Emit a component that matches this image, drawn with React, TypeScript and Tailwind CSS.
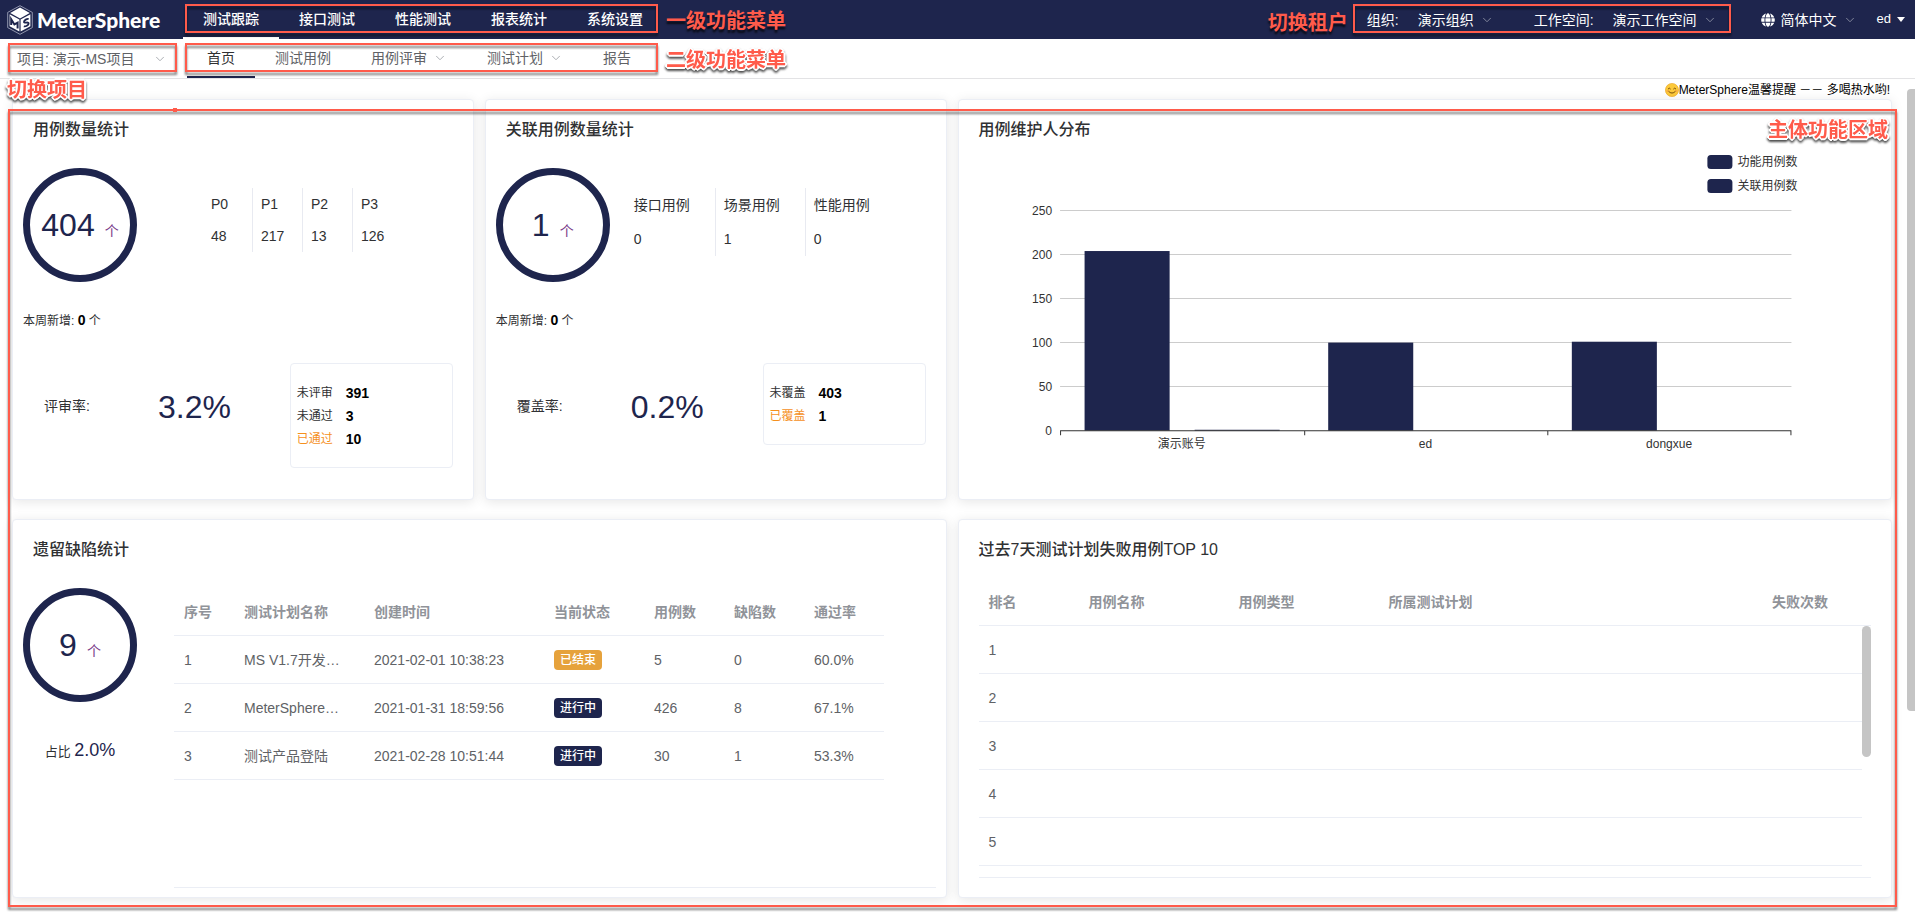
import type { ReactNode } from "react";
import { ChevronDown } from "lucide-react";
import { FaGlobe } from "react-icons/fa";

const primaryMenu = ["测试跟踪", "接口测试", "性能测试", "报表统计", "系统设置"];

const secondaryMenu = [
  { label: "首页", active: true },
  { label: "测试用例" },
  { label: "用例评审", dropdown: true },
  { label: "测试计划", dropdown: true },
  { label: "报告" },
];

const plans = [
  { id: 1, name: "MS V1.7开发…", created: "2021-02-01 10:38:23", status: "已结束", cases: 5, bugs: 0, rate: "60.0%" },
  { id: 2, name: "MeterSphere…", created: "2021-01-31 18:59:56", status: "进行中", cases: 426, bugs: 8, rate: "67.1%" },
  { id: 3, name: "测试产品登陆", created: "2021-02-28 10:51:44", status: "进行中", cases: 30, bugs: 1, rate: "53.3%" },
];

function Chevron({ className = "" }: { className?: string }) {
  return <ChevronDown aria-hidden="true" strokeWidth={1.5} className={`pointer-events-none size-[14px] shrink-0 ${className}`} />;
}

function Frame({ className = "" }: { className?: string }) {
  return (
    <div
      aria-hidden="true"
      className={`pointer-events-none absolute z-10 border-2 border-[#ff5b4b] [filter:drop-shadow(0_3px_1px_rgba(0,0,0,0.5))] ${className}`}
    />
  );
}

function Note({ children, outlined = false, className = "" }: { children: ReactNode; outlined?: boolean; className?: string }) {
  const look = outlined
    ? "[filter:drop-shadow(0_2px_1px_rgba(0,0,0,0.7))] [text-shadow:2px_0_#fff,-2px_0_#fff,0_2px_#fff,0_-2px_#fff,1px_1px_#fff,-1px_1px_#fff,1px_-1px_#fff,-1px_-1px_#fff]"
    : "[text-shadow:0_3px_2px_rgba(0,0,0,0.7)]";
  return (
    <span className={`pointer-events-none absolute z-20 text-xl leading-6 font-bold whitespace-nowrap text-[#ff5b4b] ${look} ${className}`}>
      {children}
    </span>
  );
}

function Logo() {
  return (
    <a href="#home" className="flex w-[183px] shrink-0 items-center gap-1 pl-[7px] text-white">
      <svg aria-hidden="true" viewBox="0 0 26 30" className="h-[30px] w-[26px]">
        <path d="M13 .7 25.3 7.4v15.2L13 29.3.7 22.6V7.4Z" fill="none" stroke="#aeb2c6" strokeWidth=".8" />
        <path d="M13 2.6 22.8 8 13 13.4 3.2 8Z" fill="#fff" />
        <path d="M2.6 9.2 12.4 14.6v12L2.6 21.2Z" fill="#fff" />
        <path d="M13.6 14.6 23.4 9.2v12l-9.8 5.4Z" fill="#fff" />
        <path d="M4.2 20v-5.8l3.200 5.200 3.200-1.700v5.800" fill="none" stroke="#1e254d" strokeWidth="2" />
        <path d="M21.6 14c-1.600-.4-4.600 1-4.600 2.900 0 1.700 4.600-.4 4.600 1.500 0 1.800-3.100 3.400-4.800 2.900" fill="none" stroke="#1e254d" strokeWidth="1.900" />
      </svg>
      <span className="font-['Lato'] text-[21px] leading-6 font-black">MeterSphere</span>
    </a>
  );
}

function HeaderSelect({ label, value }: { label: string; value: string }) {
  return (
    <span className="flex items-center gap-[6px]">
      <select aria-label={label} className="appearance-none bg-transparent text-sm text-white">
        <option>{value}</option>
      </select>
      <Chevron className="text-[#8e92a6]" />
    </span>
  );
}

function Header() {
  return (
    <header className="flex h-[39px] items-center bg-[#1e254d] text-sm text-white">
      <Logo />
      <nav aria-label="一级功能菜单" className="relative flex h-full shrink-0">
        {primaryMenu.map((item, i) => (
          <a
            key={item}
            href={`#${item}`}
            className={`flex w-24 items-center justify-center border-b-2 pt-[2px] pb-px font-medium ${i === 0 ? "border-white" : "border-transparent"}`}
          >
            {item}
          </a>
        ))}
        <Frame className="top-1 right-[5px] left-[2px] h-[29px]" />
        <Note className="top-[9px] left-full ml-[3px]">一级功能菜单</Note>
      </nav>
      <div className="relative ml-auto flex h-full shrink-0 items-center px-[14px]">
        <span className="mr-[19px]">组织:</span>
        <HeaderSelect label="组织" value="演示组织" />
        <span className="mr-[19px] ml-10">工作空间:</span>
        <HeaderSelect label="工作空间" value="演示工作空间" />
        <Frame className="inset-x-0 top-1 h-[29px]" />
        <Note className="top-[11px] right-full mr-[5px]">切换租户</Note>
      </div>
      <div className="ml-[30px] flex shrink-0 items-center gap-[6px]">
        <FaGlobe aria-hidden="true" className="size-[14px]" />
        <HeaderSelect label="语言" value="简体中文" />
      </div>
      <button type="button" className="mr-[10px] ml-5 flex shrink-0 items-center gap-[6px] text-[13px]">
        ed
        <svg aria-hidden="true" viewBox="0 0 8 5" className="h-[5px] w-2">
          <path d="M0 0h8L4 5Z" fill="currentColor" />
        </svg>
      </button>
    </header>
  );
}

function SubHeader() {
  return (
    <div className="flex h-10 items-stretch border-b border-[#e3e3e5] text-sm text-[#606266]">
      <div className="relative w-[187px] shrink-0 pl-[17px]">
        <div className="flex h-full w-[150px] items-center justify-between">
          <select aria-label="项目" className="w-32 appearance-none bg-transparent">
            <option>项目: 演示-MS项目</option>
          </select>
          <Chevron className="text-[#a0a3a9]" />
        </div>
        <Frame className="top-1 right-[10px] left-2 h-[29px]" />
        <Note outlined className="top-[39px] left-[7px]">切换项目</Note>
      </div>
      <nav aria-label="二级功能菜单" className="relative flex">
        {secondaryMenu.map((item) => (
          <a
            key={item.label}
            href={`#${item.label}`}
            className={`flex items-center gap-[6px] border-b-2 px-5 ${item.active ? "border-[#1e254d] text-[#303133]" : "border-transparent"}`}
          >
            {item.label}
            {item.dropdown && <Chevron className="text-[#a0a3a9]" />}
          </a>
        ))}
        <Frame className="top-1 -right-[7px] -left-[2px] h-[29px]" />
        <Note outlined className="top-[9px] left-full ml-[15px]">二级功能菜单</Note>
      </nav>
    </div>
  );
}

function Card({ title, className = "", children }: { title: string; className?: string; children: ReactNode }) {
  return (
    <section className={`rounded border border-[#ebeef5] bg-white pt-[19px] shadow-[0_2px_12px_0_rgba(0,0,0,0.1)] ${className}`}>
      <h2 className="px-5 text-base leading-[22px] font-medium text-[#303133]">{title}</h2>
      {children}
    </section>
  );
}

function Ring({ value }: { value: number }) {
  return (
    <div className="flex size-[114px] shrink-0 items-center justify-center rounded-full border-[7px] border-[#1e254d]">
      <span className="flex items-baseline gap-[10px] text-[32px] leading-10 text-[#1e254d]">
        {value}
        <span className="text-sm text-[#783887]">个</span>
      </span>
    </div>
  );
}

type Pair = [string, number];

function CountCard(props: {
  title: string;
  total: number;
  breakdown: Pair[];
  wide?: boolean;
  rateLabel: string;
  rate: string;
  details: Pair[];
}) {
  const { title, total, breakdown, wide, rateLabel, rate, details } = props;
  return (
    <Card title={title} className="min-h-[401px]">
      <div className="mt-[27px] flex px-[10px]">
        <Ring value={total} />
        <dl className={`mt-5 flex text-sm text-[#303133] ${wide ? "ml-[15px] leading-[34px]" : "ml-[65px] leading-8"}`}>
          {breakdown.map(([name, count], i) => (
            <div
              key={name}
              className={`self-start border-l pl-2 ${wide ? "w-[90px]" : "w-[50px]"} ${i ? "border-[#e8eaf1]" : "border-transparent"}`}
            >
              <dt>{name}</dt>
              <dd>{count}</dd>
            </div>
          ))}
        </dl>
      </div>
      <p className="mt-7 px-[10px] text-xs leading-5 text-[#303133]">
        本周新增: <strong className="text-sm leading-5 text-black">0</strong> 个
      </p>
      <div className="mt-8 flex items-start pr-5 pl-[31px]">
        <span className="mt-8 w-[114px] text-sm leading-[22px] text-[#303133]">{rateLabel}</span>
        <span className="mt-6 text-[32px] leading-10 text-[#1e254d]">{rate}</span>
        <dl className="ml-auto w-[163px] rounded border border-[#ebeef5] px-[6px] py-[17px]">
          {details.map(([name, count], i) => (
            <div key={name} className="flex h-[23px] items-center">
              <dt className={`w-[49px] text-xs ${i === details.length - 1 ? "text-[#f5901d]" : "text-[#303133]"}`}>{name}</dt>
              <dd className="text-sm font-bold text-black">{count}</dd>
            </div>
          ))}
        </dl>
      </div>
    </Card>
  );
}

const groups = [
  { name: "演示账号", values: [204, 1] },
  { name: "ed", values: [100, 0] },
  { name: "dongxue", values: [101, 0] },
];

function MaintainerChart() {
  const left = 101;
  const right = 832;
  const base = 289.5;
  const step = 243.5;
  const scale = 0.88;
  return (
    <svg role="img" aria-label="用例维护人分布" viewBox="0 0 932 340" className="block h-auto w-full text-xs" fill="#333">
      {["功能用例数", "关联用例数"].map((name, i) => (
        <g key={name}>
          <rect x="748" y={14 + i * 24} width="25" height="14" rx="3.500" fill="#1e254d" />
          <text x="778" y={25 + i * 24}>{name}</text>
        </g>
      ))}
      {[0, 50, 100, 150, 200, 250].map((tick) => (
        <g key={tick}>
          <text x="93" y={base - tick * scale + 4} textAnchor="end">{tick}</text>
          {tick > 0 && <line x1={left} x2={right} y1={base - tick * scale} y2={base - tick * scale} stroke="#ccc" />}
        </g>
      ))}
      {groups.map((group, i) => (
        <g key={group.name}>
          {group.values.map((value, j) => (
            <rect
              key={j}
              x={left + 24.500 + i * step + j * 110}
              y={base - value * scale}
              width="85"
              height={value * scale}
              fill="#1e254d"
            />
          ))}
          <text x={left + step / 2 + i * step} y="307" textAnchor="middle">{group.name}</text>
        </g>
      ))}
      <path d="M101.500 294v-4.500H832M345.500 289v5M588.500 289v5M831.500 289v5" fill="none" stroke="#333" />
    </svg>
  );
}

const headCell = "h-12 border-b border-[#ebeef5] px-[10px] text-left font-bold text-[#909399]";
const bodyCell = "h-12 border-b border-[#ebeef5] px-[10px]";

function DefectCard() {
  return (
    <Card title="遗留缺陷统计" className="col-span-2 min-h-[379px]">
      <div className="mt-[27px] flex px-[10px]">
        <div className="shrink-0">
          <Ring value={9} />
          <p className="mt-9 text-center text-[13px] leading-6 text-[#303133]">
            占比 <span className="text-lg leading-6 text-[#1e254d]">2.0%</span>
          </p>
        </div>
        <div className="ml-[37px] h-[300px] flex-1 border-b border-[#ebeef5]">
          <table className="w-[710px] table-fixed border-separate border-spacing-0 text-sm text-[#606266]">
            <colgroup>
              <col className="w-[60px]" />
              <col className="w-[130px]" />
              <col className="w-[180px]" />
              <col className="w-[100px]" />
              <col className="w-20" />
              <col className="w-20" />
              <col className="w-20" />
            </colgroup>
            <thead>
              <tr>
                {["序号", "测试计划名称", "创建时间", "当前状态", "用例数", "缺陷数", "通过率"].map((h) => (
                  <th key={h} className={headCell}>{h}</th>
                ))}
              </tr>
            </thead>
            <tbody>
              {plans.map((p) => (
                <tr key={p.id}>
                  <td className={bodyCell}>{p.id}</td>
                  <td className={bodyCell}>{p.name}</td>
                  <td className={bodyCell}>{p.created}</td>
                  <td className={bodyCell}>
                    <span
                      className={`flex h-5 w-12 items-center justify-center rounded text-xs font-medium text-white ${p.status === "已结束" ? "bg-[#e6a23c]" : "bg-[#1e254d]"}`}
                    >
                      {p.status}
                    </span>
                  </td>
                  <td className={bodyCell}>{p.cases}</td>
                  <td className={bodyCell}>{p.bugs}</td>
                  <td className={bodyCell}>{p.rate}</td>
                </tr>
              ))}
            </tbody>
          </table>
        </div>
      </div>
    </Card>
  );
}

function FailureCard() {
  return (
    <Card title="过去7天测试计划失败用例TOP 10" className="col-span-2 min-h-[379px]">
      <div className="mx-5 mt-[17px] flex h-[300px] items-start overflow-hidden border-b border-[#ebeef5]">
        <table className="flex-1 table-fixed border-separate border-spacing-0 text-sm text-[#606266]">
          <colgroup>
            <col className="w-[100px]" />
            <col className="w-[150px]" />
            <col className="w-[150px]" />
            <col />
            <col className="w-[100px]" />
          </colgroup>
          <thead>
            <tr>
              {["排名", "用例名称", "用例类型", "所属测试计划", "失败次数"].map((h) => (
                <th key={h} className={headCell}>{h}</th>
              ))}
            </tr>
          </thead>
          <tbody>
            {[1, 2, 3, 4, 5].map((n) => (
              <tr key={n}>
                <td className={bodyCell}>{n}</td>
                <td className={bodyCell} />
                <td className={bodyCell} />
                <td className={bodyCell} />
                <td className={bodyCell} />
              </tr>
            ))}
          </tbody>
        </table>
        <div aria-hidden="true" className="w-[9px] shrink-0">
          <div className="h-12 border-b border-[#ebeef5]" />
          <div className="h-[131px] rounded-full bg-[#c5c5c5]" />
        </div>
      </div>
    </Card>
  );
}

function Smile() {
  return (
    <svg aria-hidden="true" viewBox="0 0 14 14" className="size-[14px]">
      <circle cx="7" cy="7" r="6.600" fill="#fcc93a" stroke="#e9a21f" strokeWidth=".6" />
      <path d="M3.200 5.800q1.100-1.600 2.200 0M8.600 5.800q1.100-1.600 2.200 0M3.600 8.400q3.400 3.600 6.800 0" fill="none" stroke="#6b4208" strokeWidth=".9" strokeLinecap="round" />
      <circle cx="2.600" cy="8" r="1.100" fill="#f59a4a" opacity=".7" />
      <circle cx="11.400" cy="8" r="1.100" fill="#f59a4a" opacity=".7" />
    </svg>
  );
}

export default function App() {
  return (
    <div className="relative min-h-screen min-w-[1400px] overflow-hidden bg-white font-['Liberation_Sans','Noto_Sans_CJK_SC',sans-serif]">
      <Header />
      <SubHeader />
      <main className="relative pr-[23px] pb-5 pl-3">
        <p className="flex h-5 items-center justify-end pt-[2px] pr-[2px] text-xs text-black">
          <Smile />
          MeterSphere温馨提醒 －－ 多喝热水哟!
        </p>
        <div className="grid grid-cols-4 gap-x-[11px] gap-y-[19px]">
          <CountCard
            title="用例数量统计"
            total={404}
            breakdown={[["P0", 48], ["P1", 217], ["P2", 13], ["P3", 126]]}
            rateLabel="评审率:"
            rate="3.2%"
            details={[["未评审", 391], ["未通过", 3], ["已通过", 10]]}
          />
          <CountCard
            title="关联用例数量统计"
            total={1}
            wide
            breakdown={[["接口用例", 0], ["场景用例", 1], ["性能用例", 0]]}
            rateLabel="覆盖率:"
            rate="0.2%"
            details={[["未覆盖", 403], ["已覆盖", 1]]}
          />
          <Card title="用例维护人分布" className="col-span-2">
            <MaintainerChart />
          </Card>
          <DefectCard />
          <FailureCard />
        </div>
        <Frame className="top-[30px] right-[18px] bottom-[11px] left-2" />
        <div aria-hidden="true" className="absolute top-[29px] left-[173px] z-20 size-1 bg-[#ff5b4b]" />
        <Note outlined className="top-[39px] right-[27px]">主体功能区域</Note>
        <div aria-hidden="true" className="absolute top-[10px] right-0 h-[622px] w-2 rounded-l bg-[#c5c5c5]" />
      </main>
    </div>
  );
}
